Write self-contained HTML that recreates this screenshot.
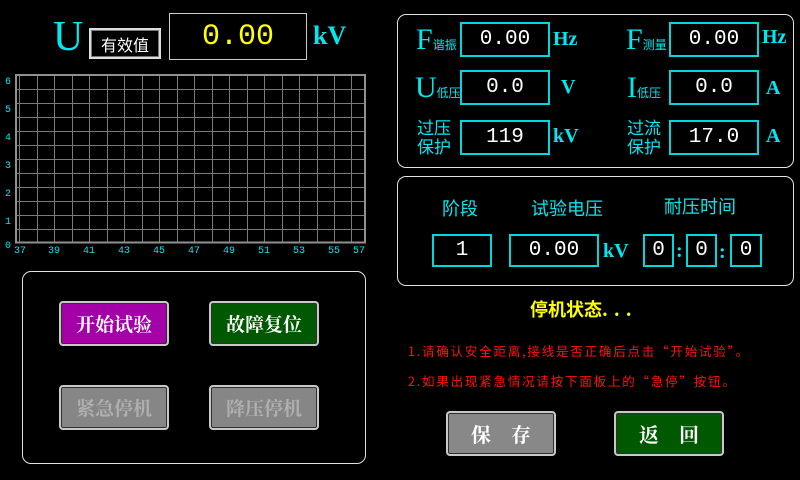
<!DOCTYPE html>
<html><head><meta charset="utf-8"><style>
*{margin:0;padding:0;box-sizing:border-box}
body{width:800px;height:480px;background:#000;position:relative;overflow:hidden;font-family:"Liberation Sans","Noto Sans CJK SC",sans-serif}
.a{position:absolute}
.cy{color:#00e8f0}
.box{position:absolute;border:2px solid #00d8e0;color:#fff;font-family:"Liberation Mono","Noto Sans CJK SC",monospace;font-size:21px;display:flex;align-items:center;justify-content:center}
.panel{position:absolute;border:1px solid #e0e0e0;border-radius:9px}
.btn{position:absolute;width:110px;height:45px;border:2px solid #c8c8c8;border-radius:4px;box-shadow:inset 0 0 0 1px #303030;display:flex;align-items:center;justify-content:center;font-size:19px;font-weight:bold;font-family:"Noto Serif CJK SC","Noto Sans CJK SC",serif}
.ser{font-family:"Liberation Serif",serif}
.unit{position:absolute;color:#00e8f0;font-family:"Liberation Serif",serif;font-weight:bold;font-size:20px}
.sub{font-size:12px;font-family:"Noto Sans CJK SC",sans-serif}
.lbl{position:absolute;color:#00e8f0;font-size:17px;font-family:"Noto Sans CJK SC",sans-serif;line-height:19px}
.red{position:absolute;color:#ff1010;font-size:12.5px;letter-spacing:1.8px;font-family:'Noto Sans CJK SC',sans-serif}
</style></head><body>
<div class="a cy ser" style="left:53px;top:14px;font-size:42px;line-height:46px">U</div>
<div class="a" style="left:89px;top:28px;width:72px;height:31px;border:2px solid #ddd;box-shadow:inset 0 0 0 1px #777;color:#fff;font-size:16px;display:flex;align-items:center;justify-content:center;font-family:'Noto Sans CJK SC',sans-serif">有效值</div>
<div class="a" style="left:169px;top:13px;width:138px;height:47px;border:1px solid #ccc;color:#ffff00;font-family:'Liberation Mono',monospace;font-size:30px;display:flex;align-items:center;justify-content:center">0.00</div>
<div class="unit" style="left:313px;top:21px;font-size:26px">kV</div>

<svg class="a" style="left:0;top:70px" width="380" height="190">
<g stroke="#7a7a7a" stroke-width="1">
<line x1="19.5" y1="5" x2="19.5" y2="172"/>
<line x1="37.5" y1="5" x2="37.5" y2="172"/><line x1="54.5" y1="5" x2="54.5" y2="172"/><line x1="72.5" y1="5" x2="72.5" y2="172"/><line x1="89.5" y1="5" x2="89.5" y2="172"/><line x1="107.5" y1="5" x2="107.5" y2="172"/><line x1="124.5" y1="5" x2="124.5" y2="172"/><line x1="142.5" y1="5" x2="142.5" y2="172"/><line x1="159.5" y1="5" x2="159.5" y2="172"/><line x1="177.5" y1="5" x2="177.5" y2="172"/><line x1="194.5" y1="5" x2="194.5" y2="172"/><line x1="212.5" y1="5" x2="212.5" y2="172"/><line x1="229.5" y1="5" x2="229.5" y2="172"/><line x1="247.5" y1="5" x2="247.5" y2="172"/><line x1="264.5" y1="5" x2="264.5" y2="172"/><line x1="282.5" y1="5" x2="282.5" y2="172"/><line x1="299.5" y1="5" x2="299.5" y2="172"/><line x1="317.5" y1="5" x2="317.5" y2="172"/><line x1="334.5" y1="5" x2="334.5" y2="172"/><line x1="351.5" y1="5" x2="351.5" y2="172"/>
<line x1="16" y1="19.5" x2="365" y2="19.5"/><line x1="16" y1="33.5" x2="365" y2="33.5"/><line x1="16" y1="47.5" x2="365" y2="47.5"/><line x1="16" y1="61.5" x2="365" y2="61.5"/><line x1="16" y1="75.5" x2="365" y2="75.5"/><line x1="16" y1="89.5" x2="365" y2="89.5"/><line x1="16" y1="103.5" x2="365" y2="103.5"/><line x1="16" y1="117.5" x2="365" y2="117.5"/><line x1="16" y1="131.5" x2="365" y2="131.5"/><line x1="16" y1="145.5" x2="365" y2="145.5"/><line x1="16" y1="159.5" x2="365" y2="159.5"/>
</g>
<rect x="16" y="5" width="349" height="167.5" fill="none" stroke="#909090" stroke-width="2"/>
<g fill="#00e8f0" font-family="Liberation Mono,monospace" font-size="10">
<text x="5" y="14">6</text><text x="5" y="42">5</text><text x="5" y="70">4</text><text x="5" y="98">3</text><text x="5" y="126">2</text><text x="5" y="154">1</text><text x="5" y="178">0</text>
<g text-anchor="middle"><text x="20" y="183">37</text><text x="54" y="183">39</text><text x="89" y="183">41</text><text x="124" y="183">43</text><text x="159" y="183">45</text><text x="194" y="183">47</text><text x="229" y="183">49</text><text x="264" y="183">51</text><text x="299" y="183">53</text><text x="334" y="183">55</text><text x="359" y="183">57</text></g>
</g></svg>

<div class="panel" style="left:22px;top:271px;width:344px;height:193px"></div>
<div class="btn" style="left:59px;top:301px;background:#a400a8;color:#fff">开始试验</div>
<div class="btn" style="left:209px;top:301px;background:#005800;color:#fff">故障复位</div>
<div class="btn" style="left:59px;top:385px;background:#868686;color:#b0b0b0">紧急停机</div>
<div class="btn" style="left:209px;top:385px;background:#868686;color:#b0b0b0">降压停机</div>

<div class="panel" style="left:397px;top:14px;width:397px;height:154px"></div>
<div class="a cy ser" style="left:416px;top:24px;font-size:30px;line-height:32px">F<span class="sub">谐振</span></div>
<div class="box" style="left:460px;top:22px;width:90px;height:35px">0.00</div>
<div class="unit" style="left:553px;top:28px">Hz</div>
<div class="a cy ser" style="left:626px;top:24px;font-size:30px;line-height:32px">F<span class="sub">测量</span></div>
<div class="box" style="left:669px;top:22px;width:90px;height:35px">0.00</div>
<div class="unit" style="left:762px;top:26px">Hz</div>

<div class="a cy ser" style="left:415px;top:72px;font-size:30px;line-height:32px">U<span class="sub">低压</span></div>
<div class="box" style="left:460px;top:70px;width:90px;height:35px">0.0</div>
<div class="unit" style="left:561px;top:76px">V</div>
<div class="a cy ser" style="left:627px;top:72px;font-size:30px;line-height:32px">I<span class="sub">低压</span></div>
<div class="box" style="left:669px;top:70px;width:90px;height:35px">0.0</div>
<div class="unit" style="left:766px;top:77px">A</div>

<div class="lbl" style="left:417px;top:117px">过压<br>保护</div>
<div class="box" style="left:460px;top:120px;width:90px;height:35px">119</div>
<div class="unit" style="left:553px;top:125px">kV</div>
<div class="lbl" style="left:627px;top:117px">过流<br>保护</div>
<div class="box" style="left:669px;top:120px;width:90px;height:35px">17.0</div>
<div class="unit" style="left:766px;top:125px">A</div>

<div class="panel" style="left:397px;top:176px;width:397px;height:110px"></div>
<div class="lbl" style="left:442px;top:199px;font-size:18px">阶段</div>
<div class="lbl" style="left:531px;top:199px;font-size:18px">试验电压</div>
<div class="lbl" style="left:664px;top:197px;font-size:18px">耐压时间</div>
<div class="box" style="left:432px;top:234px;width:60px;height:33px">1</div>
<div class="box" style="left:509px;top:234px;width:90px;height:33px">0.00</div>
<div class="unit" style="left:603px;top:240px">kV</div>
<div class="box" style="left:643px;top:234px;width:31px;height:33px">0</div>
<div class="unit" style="left:676px;top:240px">:</div>
<div class="box" style="left:686px;top:234px;width:31px;height:33px">0</div>
<div class="unit" style="left:719px;top:241px">:</div>
<div class="box" style="left:730px;top:234px;width:32px;height:33px">0</div>

<div class="a" style="left:530px;top:296px;color:#ffff00;font-size:18px;font-weight:bold;font-family:'Noto Sans CJK SC',sans-serif">停机状态<span style="letter-spacing:6px">...</span></div>
<div class="red" style="left:408px;top:341px">1.请确认安全距离,接线是否正确后点击“开始试验”。</div>
<div class="red" style="left:408px;top:371px">2.如果出现紧急情况请按下面板上的“急停”按钮。</div>
<div class="btn" style="left:446px;top:411px;background:#888;color:#fff;font-size:20px">保&emsp;存</div>
<div class="btn" style="left:614px;top:411px;background:#005800;color:#fff;font-size:20px">返&emsp;回</div>
</body></html>
